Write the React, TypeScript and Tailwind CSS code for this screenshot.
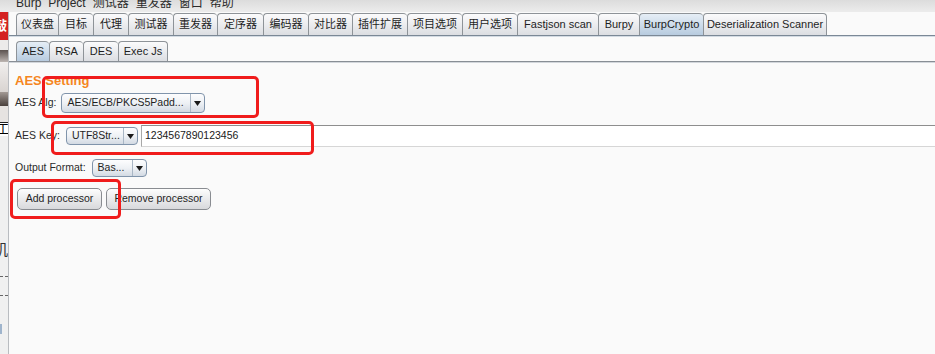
import clsx from "clsx";

const mainTabs = [
  { label: "仪表盘", w: "w-[42px]" },
  { label: "目标", w: "w-[35px]" },
  { label: "代理", w: "w-[35px]" },
  { label: "测试器", w: "w-[45px]" },
  { label: "重发器", w: "w-[44px]" },
  { label: "定序器", w: "w-[46px]" },
  { label: "编码器", w: "w-[45px]" },
  { label: "对比器", w: "w-[44px]" },
  { label: "插件扩展", w: "w-[55px]" },
  { label: "项目选项", w: "w-[55px]" },
  { label: "用户选项", w: "w-[55px]" },
  { label: "Fastjson scan", w: "w-[81px]" },
  { label: "Burpy", w: "w-[41px]" },
  { label: "BurpCrypto", w: "w-[64px]", active: true },
  { label: "Deserialization Scanner", w: "w-[124px]" },
];

const subTabs = [
  { label: "AES", w: "w-[33px]", active: true },
  { label: "RSA", w: "w-[34px]" },
  { label: "DES", w: "w-[35px]" },
  { label: "Exec Js", w: "w-[50px]" },
];

const menuItems = ["Burp", "Project", "测试器", "重发器", "窗口", "帮助"];

function Tab({ label, w, active, h, last }: { label: string; w: string; active?: boolean; h: string; last?: boolean }) {
  return (
    <div
      className={clsx(
        "flex items-center justify-center border-l border-t border-[#8e9398] rounded-t-[4px] text-[11px] text-[#1e1e1e] whitespace-nowrap",
        last && "border-r",
        active
          ? "bg-gradient-to-b from-[#e6eef6] to-[#b7cbdf]"
          : "bg-gradient-to-b from-[#fbfbfc] to-[#dcdee2]",
        w,
        h
      )}
    >
      {label}
    </div>
  );
}

function Arrow() {
  return (
    <svg width="7" height="5" viewBox="0 0 7 5">
      <path d="M0 0 L7 0 L3.5 5 Z" fill="#1a1a1a" />
    </svg>
  );
}

function Combo({ text, w, h }: { text: string; w: string; h: string }) {
  return (
    <div
      className={clsx(
        "flex items-stretch rounded-[4px] border border-[#8094ab] bg-gradient-to-b from-[#fdfdfe] via-[#eef1f5] to-[#d3dae3] text-[10.5px] text-[#1f1f1f]",
        w,
        h
      )}
    >
      <div className="flex-1 flex items-center pl-[5px] overflow-hidden whitespace-nowrap">{text}</div>
      <div className="w-[14px] flex items-center justify-center border-l border-[#a9b6c5]">
        <Arrow />
      </div>
    </div>
  );
}

function Button({ children, w }: { children: React.ReactNode; w: string }) {
  return (
    <div
      className={clsx(
        "h-[22px] flex items-center justify-center rounded-[5px] border border-[#898c91] bg-gradient-to-b from-[#fdfdfd] to-[#d8d9dc] text-[10.5px] text-[#1f1f1f]",
        w
      )}
    >
      {children}
    </div>
  );
}

export default function App() {
  return (
    <div className="relative w-[935px] h-[354px] overflow-hidden bg-[#fafafa] font-['Liberation_Sans','Noto_Sans_CJK_SC',sans-serif]">
      {/* menu bar, cut off at the top */}
      <div className="h-[12px] overflow-hidden bg-gradient-to-b from-[#dcdcdc] to-[#ececec] flex gap-[7px] pl-[16px] text-[12px] leading-[14px] text-[#2a2a2a]">
        {menuItems.map((m) => (
          <span key={m} className="-mt-[4px]">
            {m}
          </span>
        ))}
      </div>

      <div className="flex h-[342px]">
        {/* window behind, left edge */}
        <div className="w-[8px] flex flex-col overflow-hidden">
          <div className="h-[28px] bg-[#d42222] text-white text-[13px] font-bold leading-[28px] -indent-[6px] overflow-hidden">
            敲
          </div>
          <div className="h-[10px] bg-[#ecebea]" />
          <div className="h-[12px] bg-gradient-to-b from-[#5c5350] to-[#bdb6b2]" />
          <div className="h-[30px] bg-gradient-to-b from-[#f1efee] to-[#d9d4d1]" />
          <div className="h-[14px] bg-gradient-to-b from-[#a39a95] to-[#4a413d]" />
          <div className="h-[16px] bg-[#e6e3e1]" />
          <div className="h-[14px] bg-white text-[12px] leading-[14px] text-black -indent-[3px] border-t border-[#222]">
            工
          </div>
          <div className="flex-1 bg-[#f0f0f0] flex flex-col">
            <div className="h-[105px]" />
            <div className="text-[15px] leading-[18px] text-[#333] -indent-[7px] whitespace-nowrap">
              机<span className="text-[#f0a040]">|</span>
            </div>
            <div className="h-[17px]" />
            <div className="border-t border-dashed border-[#666]" />
            <div className="h-[18px]" />
            <div className="border-t border-dashed border-[#666]" />
            <div className="h-[28px]" />
            <div className="h-[10px] w-[2px] bg-[#9fb4cc]" />
          </div>
        </div>

        {/* burp main panel */}
        <div className="flex-1 flex flex-col border-l border-[#b9bcc0]">
          <div className="pt-[1px] pl-[7px] flex border-b border-[#7b8896]">
            {mainTabs.map((t, i) => (
              <Tab key={t.label} {...t} h="h-[22px]" last={i === mainTabs.length - 1} />
            ))}
          </div>
          <div className="h-px bg-[#d3dbe3]" />

          <div className="pt-[4px] pl-[7px] flex border-b border-[#888e95]">
            {subTabs.map((t, i) => (
              <Tab key={t.label} {...t} h="h-[20px]" last={i === subTabs.length - 1} />
            ))}
          </div>
          <div className="h-px bg-[#d2d6db]" />

          {/* AES settings */}
          <div className="flex flex-col pl-[6px] text-[10.5px] text-[#2b2b2b]">
            <div className="mt-[10px] text-[13px] leading-[15px] font-bold text-[#f5861f]">AES Setting</div>

            <div className="mt-[5px] flex items-center gap-[5px] h-[20px]">
              <span>AES Alg:</span>
              <Combo text="AES/ECB/PKCS5Padd..." w="w-[144px]" h="h-[20px]" />
            </div>

            <div className="mt-[12px] flex items-center h-[22px]">
              <span className="mr-[6px]">AES Key:</span>
              <Combo text="UTF8Str..." w="w-[72px]" h="h-[18px]" />
              <div className="ml-[3px] flex-1 h-[22px] flex items-center bg-white border-t border-[#8e8e8e] border-b border-b-[#d6d6d6] border-l border-l-[#a8a8a8] pl-[3px] text-[10.5px] text-[#1a1a1a]">
                1234567890123456
              </div>
            </div>

            <div className="mt-[12px] flex items-center gap-[6px] h-[18px]">
              <span>Output Format:</span>
              <Combo text="Bas..." w="w-[55px]" h="h-[18px]" />
            </div>

            <div className="mt-[11px] ml-[2px] flex gap-[4px]">
              <Button w="w-[85px]">Add processor</Button>
              <Button w="w-[105px]">Remove processor</Button>
            </div>
          </div>
        </div>
      </div>

      {/* red annotation boxes drawn over the screenshot */}
      <div className="absolute left-[42px] top-[76px] w-[217px] h-[42px] border-[3px] border-[#f01c1c] rounded-[5px]" />
      <div className="absolute left-[51px] top-[121px] w-[263px] h-[34px] border-[3px] border-[#f01c1c] rounded-[5px]" />
      <div className="absolute left-[10px] top-[179px] w-[111px] h-[40px] border-[3px] border-[#f01c1c] rounded-[5px]" />
    </div>
  );
}
